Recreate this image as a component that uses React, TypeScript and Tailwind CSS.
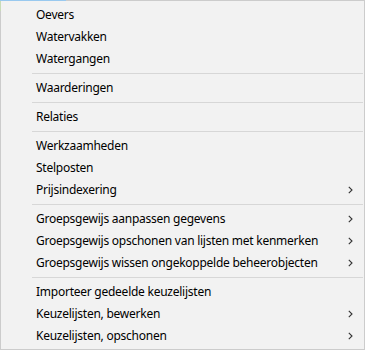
import React from "react";

type Item = { label: string; sub?: boolean } | "sep";

const items: Item[] = [
  { label: "Oevers" },
  { label: "Watervakken" },
  { label: "Watergangen" },
  "sep",
  { label: "Waarderingen" },
  "sep",
  { label: "Relaties" },
  "sep",
  { label: "Werkzaamheden" },
  { label: "Stelposten" },
  { label: "Prijsindexering", sub: true },
  "sep",
  { label: "Groepsgewijs aanpassen gegevens", sub: true },
  { label: "Groepsgewijs opschonen van lijsten met kenmerken", sub: true },
  { label: "Groepsgewijs wissen ongekoppelde beheerobjecten", sub: true },
  "sep",
  { label: "Importeer gedeelde keuzelijsten" },
  { label: "Keuzelijsten, bewerken", sub: true },
  { label: "Keuzelijsten, opschonen", sub: true },
];

function Chevron() {
  return (
    <svg width="5" height="8" viewBox="0 0 5 8" className="block">
      <path d="M0.8 0.8 L4 4 L0.8 7.2" fill="none" stroke="#333" strokeWidth="1.1" />
    </svg>
  );
}

export default function App() {
  return (
    <div className="w-[365px] h-[350px] bg-white">
      <div
        className="relative w-[365px] h-[350px] bg-[#f2f2f2] border border-[#cccccc] pt-[3px] pb-[2px] text-black"
        style={{ fontFamily: '"Noto Sans", "Open Sans", sans-serif' }}
      >
        <div className="absolute -top-px -left-px w-[66px] h-px bg-[#99c9ef]" />
        <div className="absolute top-0 -left-px w-px h-[10px] bg-[#c9dcb7]" />
        {items.map((it, i) =>
          it === "sep" ? (
            <div key={i} className="h-[7px] flex items-center pl-[31px] pr-[1px]">
              <div className="h-px w-full bg-[#d7d7d7]" />
            </div>
          ) : (
            <div key={i} className="h-[22px] flex items-center pl-[35px] pr-[11px] text-[12px] leading-none tracking-[-0.25px]">
              <span className="flex-1 whitespace-nowrap">{it.label}</span>
              {it.sub && <Chevron />}
            </div>
          )
        )}
      </div>
    </div>
  );
}
